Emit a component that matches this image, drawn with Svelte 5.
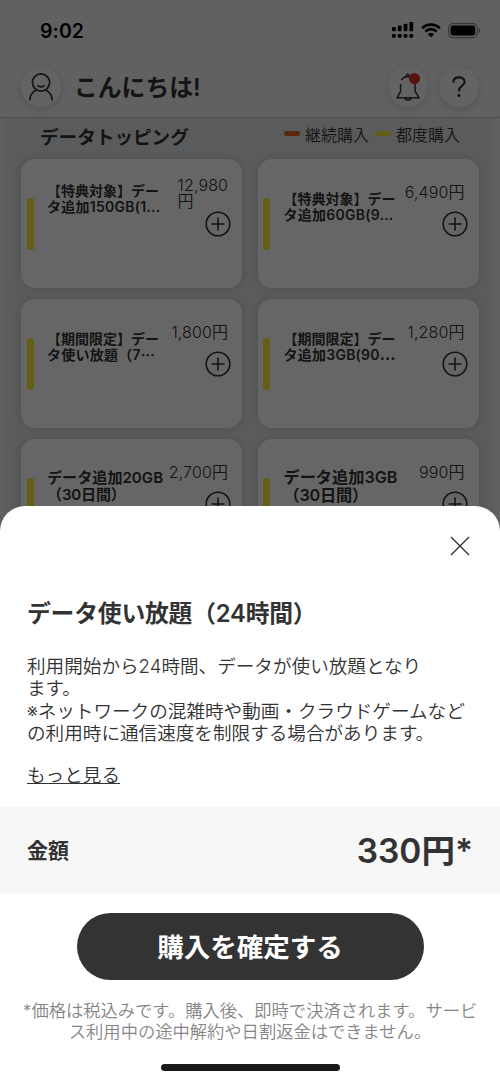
<script lang="ts">
  interface Topping {
    name: string[];
    price: string[];
    size?: "medium" | "large";
  }

  const toppings: Topping[] = [
    { name: ["【特典対象】デー", "タ追加150GB(1..."], price: ["12,980", "円"] },
    { name: ["【特典対象】デー", "タ追加60GB(9..."], price: ["6,490円"] },
    { name: ["【期間限定】デー", "タ使い放題（7⋯"], price: ["1,800円"] },
    { name: ["【期間限定】デー", "タ追加3GB(90⋯"], price: ["1,280円"] },
    { name: ["データ追加20GB", "（30日間）"], price: ["2,700円"], size: "medium" },
    { name: ["データ追加3GB", "（30日間）"], price: ["990円"], size: "large" },
  ];

  const description = [
    "利用開始から24時間、データが使い放題となり",
    "ます。",
    "※ネットワークの混雑時や動画・クラウドゲームなど",
    "の利用時に通信速度を制限する場合があります。",
  ];

  let open = $state(true);
</script>

<div class="screen">
  <div class="status">
    <span class="time">9:02</span>
    <div class="indicators">
      <svg width="22" height="17" viewBox="0 0 22 17">
        <rect x="0" y="5" width="3.8" height="4.2" rx="1" />
        <rect x="5.8" y="3.5" width="3.8" height="5.7" rx="1" />
        <rect x="11.6" y="1.8" width="3.8" height="7.4" rx="1" />
        <rect x="17.4" y="0" width="3.8" height="9.2" rx="1" />
        <rect x="0" y="12" width="3.8" height="3.8" rx="1.2" />
        <rect x="5.8" y="12" width="3.8" height="3.8" rx="1.2" />
        <rect x="11.6" y="12" width="3.8" height="3.8" rx="1.2" />
        <rect x="17.4" y="12" width="3.8" height="3.8" rx="1.2" />
      </svg>
      <svg class="wifi" width="20" height="15" viewBox="0 0 20 15">
        <path d="M1.2 5.2 C6.2 .4 13.8 .4 18.8 5.2" />
        <path d="M4.4 8.5 C7.6 5.4 12.4 5.4 15.6 8.5" />
        <path class="dot" d="M10 14.3 L6.9 11.2 C8.7 9.6 11.3 9.6 13.1 11.2 Z" />
      </svg>
      <svg width="33" height="16" viewBox="0 0 33 16">
        <rect class="shell" x=".6" y=".6" width="28.6" height="14" rx="4.2" />
        <rect x="2.6" y="2.6" width="24.6" height="10" rx="2.4" />
        <path class="tip" d="M30.6 5 C32.8 5.6 32.8 9.6 30.6 10.2 Z" />
      </svg>
    </div>
  </div>

  <header>
    <button class="round" aria-label="アカウント">
      <svg width="26" height="30" viewBox="0 0 26 30">
        <circle cx="13" cy="10.5" r="8.6" />
        <path d="M9.5 13.2 C11.3 15.4 14.7 15.4 16.5 13.2" />
        <path d="M1.7 28.5 C2 23.5 4.5 19.8 8.5 18 M24.3 28.5 C24 23.5 21.5 19.8 17.5 18" />
      </svg>
    </button>
    <h1>こんにちは!</h1>
    <button class="round bell" aria-label="お知らせ">
      <svg width="24" height="28" viewBox="0 0 24 28">
        <path d="M5.2 7.2 C6.4 5.2 8.6 3.8 11.5 3.5 C15.5 3.7 19 6.5 19 11 V18 L23 24.7 H1.2 L4.6 18.4 V11" />
        <path d="M10.2 3.5 C9.8 .6 13.4 .6 13 3.5 M9 25 C9.6 27.8 14.4 27.8 15 25" />
      </svg>
      <span class="badge"></span>
    </button>
    <button class="round" aria-label="ヘルプ">
      <svg width="16" height="22" viewBox="0 0 16 22">
        <path class="hook" d="M2.4 5.6 C2.8 2.8 4.8 1.4 7.8 1.4 C11.2 1.4 13.6 3.2 13.6 6 C13.6 10 8 9.8 8 14.4" />
        <circle class="point" cx="8" cy="19.4" r="1.6" />
      </svg>
    </button>
  </header>

  <main>
    <div class="heading">
      <h2>データトッピング</h2>
      <div class="legend">
        <i class="repeat"></i><span>継続購入</span>
        <i class="once"></i><span>都度購入</span>
      </div>
    </div>
    <div class="cards">
      {#each toppings as item}
        <article class:raised={item.price.length > 1}>
          <div class="bar"></div>
          <div class="name {item.size ?? ''}">
            {#each item.name as line}<div>{line}</div>{/each}
          </div>
          <div class="side">
            <div class="price">
              {#each item.price as line}<div>{line}</div>{/each}
            </div>
            <svg class="plus" width="26" height="26" viewBox="0 0 26 26">
              <circle cx="13" cy="13" r="11.8" />
              <path d="M13 6.5 V19.5 M6.5 13 H19.5" />
            </svg>
          </div>
        </article>
      {/each}
    </div>
  </main>

  {#if open}
    <div class="backdrop"></div>
    <section class="sheet" role="dialog" aria-labelledby="plan">
      <button class="close" aria-label="閉じる" onclick={() => (open = false)}>
        <svg width="20" height="20" viewBox="0 0 20 20">
          <path d="M1 1 L19 19 M19 1 L1 19" />
        </svg>
      </button>
      <h3 id="plan">データ使い放題（24時間）</h3>
      <div class="description">
        {#each description as line}<div>{line}</div>{/each}
      </div>
      <button class="more">もっと見る</button>
      <div class="amount">
        <span>金額</span>
        <strong>330円*</strong>
      </div>
      <button class="confirm">購入を確定する</button>
      <p class="note">
        *価格は税込みです。購入後、即時で決済されます。サービ<br />ス利用中の途中解約や日割返金はできません。
      </p>
      <div class="home"></div>
    </section>
  {/if}
</div>

<style>
  :global(body) {
    background: #fff;
  }

  .screen {
    position: relative;
    width: 500px;
    height: 1082px;
    overflow: hidden;
    background: #f2f3f6;
    color: #333;
    font-family: Inter, "Noto Sans CJK JP", sans-serif;
    font-weight: 350;
  }

  button {
    padding: 0;
    border: 0;
    background: none;
    color: inherit;
    font-family: inherit;
    font-weight: inherit;
    cursor: pointer;
  }

  svg {
    display: block;
    flex: none;
  }

  h1,
  h2,
  h3,
  p {
    margin: 0;
  }

  .status {
    display: flex;
    align-items: center;
    justify-content: space-between;
    height: 61px;
    padding: 0 19px 0 40px;
    color: #000;
  }

  .time {
    font-size: 19.5px;
    font-weight: 600;
    letter-spacing: 0.1px;
  }

  .indicators {
    display: flex;
    align-items: center;
    gap: 7px;
  }

  .wifi path {
    fill: none;
    stroke: #000;
    stroke-width: 2.7;
  }

  .wifi .dot {
    fill: #000;
    stroke: none;
  }

  .shell {
    fill: none;
    stroke: #888;
    stroke-width: 1.2;
  }

  .tip {
    fill: #888;
  }

  header {
    display: flex;
    align-items: center;
    box-sizing: border-box;
    height: 57px;
    padding: 0 21px 5px;
    border-bottom: 1px solid #c4c6c9;
  }

  .round {
    position: relative;
    display: grid;
    place-items: center;
    width: 40px;
    height: 40px;
    border-radius: 50%;
    background: #f7f7f9;
    box-shadow: 0 2px 8px rgba(0, 0, 0, 0.16);
  }

  .round svg {
    fill: none;
    stroke: #333;
    stroke-width: 1.7;
  }

  .round .hook {
    stroke-width: 2.2;
    stroke-linecap: round;
  }

  .round .point {
    fill: #333;
    stroke: none;
  }

  .bell {
    margin-right: 11px;
  }

  .bell svg {
    stroke-width: 1.5;
  }

  .badge {
    position: absolute;
    top: 6px;
    right: 8px;
    width: 11px;
    height: 11px;
    border-radius: 50%;
    background: #e0301e;
  }

  h1 {
    flex: 1;
    margin: 2px 0 0 13px;
    font-size: 23.8px;
    font-weight: 600;
    line-height: 32px;
  }

  main {
    height: 964px;
    padding: 0 21px;
    background: linear-gradient(90deg, #eff1f5, #e2e4e8 12px, #e2e4e8 488px, #eff1f5);
  }

  .heading {
    display: flex;
    justify-content: space-between;
    height: 41px;
    padding: 0 19px 0 19px;
  }

  h2 {
    font-size: 18.6px;
    font-weight: 600;
    line-height: 38px;
  }

  .legend {
    display: flex;
    align-items: center;
    height: 31px;
    font-size: 16px;
  }

  .legend i {
    width: 16px;
    height: 5px;
    margin-right: 5px;
    border-radius: 3px;
  }

  .legend .repeat {
    background: #e0602a;
  }

  .legend .once {
    margin-left: 6px;
    background: #f3ea3c;
  }

  .cards {
    display: grid;
    grid-template-columns: 221px 221px;
    gap: 11px 15.5px;
  }

  article {
    display: flex;
    box-sizing: border-box;
    height: 129px;
    padding-right: 11px;
    border-radius: 14px;
    background: #fff;
    box-shadow: 0 0 10px rgba(0, 0, 0, 0.15);
  }

  .bar {
    width: 7px;
    height: 52px;
    margin: 39px 13.5px 0 5.5px;
    border-radius: 2px;
    background: #fbec3a;
  }

  .name {
    width: 117px;
    margin-top: 32px;
    font-size: 14px;
    font-weight: 600;
    line-height: 15.5px;
    white-space: nowrap;
  }

  .name div:last-child {
    letter-spacing: 0.25px;
  }

  .name.medium {
    margin-top: 31px;
    font-size: 15.1px;
    line-height: 16.7px;
  }

  .name.large {
    margin-top: 30px;
    font-size: 16.2px;
    line-height: 17.5px;
  }

  .name.medium div:last-child,
  .name.large div:last-child {
    letter-spacing: -0.2px;
  }

  .raised .name {
    margin-top: 24px;
  }

  .side {
    display: flex;
    flex: 1;
    flex-direction: column;
    align-items: flex-end;
    justify-content: flex-start;
  }

  .price {
    height: 26px;
    margin: 25px 3px 0 0;
    font-size: 16px;
    line-height: 16px;
    letter-spacing: 0.1px;
    white-space: nowrap;
  }

  .raised .price {
    height: 33px;
    margin-top: 18px;
  }

  .plus {
    margin-top: 1px;
    fill: none;
    stroke: #333;
    stroke-width: 1.6;
  }

  .backdrop {
    position: absolute;
    inset: 0;
    background: rgba(0, 0, 0, 0.6);
  }

  .sheet {
    position: absolute;
    inset: 506px 0 0;
    display: flex;
    flex-direction: column;
    align-items: flex-start;
    border-radius: 25px 25px 0 0;
    background: #fff;
  }

  .close {
    align-self: flex-end;
    margin: 30px 30px 0 0;
  }

  .close path {
    stroke: #333;
    stroke-width: 1.4;
  }

  h3 {
    margin: 42px 0 0 27px;
    font-size: 23.8px;
    font-weight: 600;
    line-height: 32px;
    letter-spacing: -0.2px;
  }

  .description {
    margin: 25px 0 0 27px;
    font-size: 18.6px;
    line-height: 22.3px;
    white-space: nowrap;
  }

  .more {
    height: 20px;
    margin: 20px 0 0 27px;
    border-bottom: 1px solid #333;
    font-size: 18.6px;
    line-height: 22px;
  }

  .amount {
    display: flex;
    align-items: center;
    justify-content: space-between;
    align-self: stretch;
    box-sizing: border-box;
    height: 87px;
    margin-top: 23px;
    padding: 0 27px 4px;
    background: #f7f7f7;
    font-size: 21px;
    font-weight: 600;
  }

  .amount strong {
    font-size: 33.5px;
    font-weight: 600;
  }

  .confirm {
    align-self: center;
    width: 347px;
    height: 67px;
    margin-top: 19px;
    padding-bottom: 3px;
    border-radius: 34px;
    background: #333;
    color: #fff;
    font-size: 26.5px;
    font-weight: 600;
  }

  .note {
    align-self: center;
    margin-top: 21px;
    color: #858585;
    font-size: 17.3px;
    line-height: 20.7px;
    text-align: center;
    white-space: nowrap;
  }

  .home {
    align-self: center;
    width: 179px;
    height: 7px;
    margin-top: 21px;
    border-radius: 4px;
    background: #1a1a1a;
  }
</style>
